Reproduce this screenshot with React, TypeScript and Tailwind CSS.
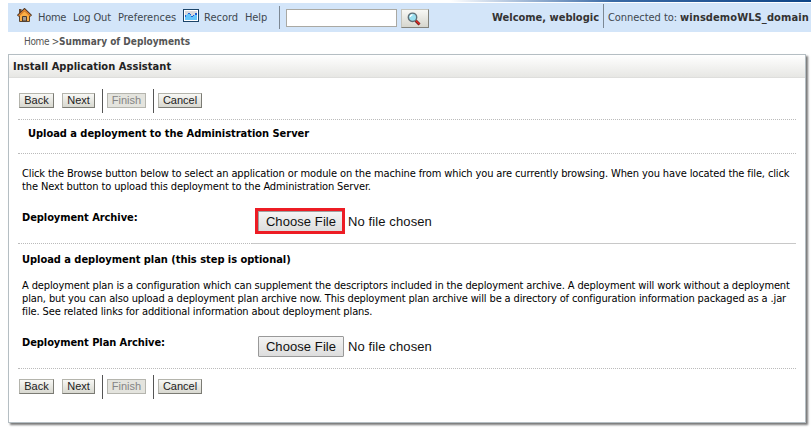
import type { ReactNode } from 'react';

function HomeIcon() {
  return (
    <svg className="ml-[9px] mt-[5px] h-[14px] w-[15px] shrink-0" viewBox="0 0 15 14">
      <path d="M2.500 7V13.500H12.500V7L7.500 2.500Z" fill="#fdae44" stroke="#5b4632" />
      <path d="M2 1h2.500v3l-2.500 2z" fill="#6b4a34" />
      <path d="M.8 8 7.500 1.400l6.700 6.600" fill="none" stroke="#4f3a2a" strokeWidth="2.400" />
      <path d="M1.600 7.800 7.500 2l5.900 5.800" fill="none" stroke="#f58a2c" strokeWidth="1.200" />
      <path d="M5.500 13V8.500h4V13z" fill="#a39a92" stroke="#4a3a2e" />
    </svg>
  );
}

function RecordIcon() {
  return (
    <svg className="absolute left-[175px] top-[6px] h-[13px] w-[16px]" viewBox="0 0 16 13" shapeRendering="crispEdges">
      <path d="M0 0h16v13H0z" fill="#1c4468" />
      <path d="M1 1h14v11H1z" fill="#fff" />
      <path d="M2 2h12v5H2z" fill="#d9d9dc" />
      <path d="M2 7h1V6h1V5h3v1h1v1h3V6h1V5h2v6H2z" fill="#66c6fb" />
      <path d="M2 6h1v2H2zM5 4h2v1H5zM7 5h1v1H7zM8 7h2v1H8zM10 6h1v1h-1zM12 4h2v2h-2z" fill="#1e5fd6" />
    </svg>
  );
}

function SearchIcon() {
  return (
    <svg className="-ml-[2px] h-[14px] w-[14px]" viewBox="0 0 14 14">
      <path d="m8.500 8.500 4 4" stroke="#5c1a18" strokeWidth="2.800" />
      <path d="m8.500 8.300 4 4" stroke="#e02a24" strokeWidth="1.600" />
      <circle cx="5.500" cy="5.300" r="4.200" fill="#9be0f0" stroke="#5f6f78" strokeWidth="1.400" />
      <path d="M3.200 5a2.400 2.400 0 0 1 2.300-2.200" stroke="#fff" strokeWidth="1.200" fill="none" />
    </svg>
  );
}

function SmallButton({ children, className }: { children: ReactNode; className: string }) {
  return (
    <button
      className={
        'mt-[4px] flex h-[15px] items-center justify-center border border-[#b4b4ac] border-b-[#7b7b74] border-r-[#7b7b74] bg-linear-to-b from-[#f8f8f5] to-[#d8d8d0] font-["Liberation_Sans",sans-serif] text-[11px] leading-[13px] text-[#222] ' +
        className
      }
    >
      {children}
    </button>
  );
}

function ButtonRow() {
  return (
    <div className="flex h-[24px] items-start">
      <SmallButton className="ml-[1px] w-[35px]">Back</SmallButton>
      <SmallButton className="ml-[8px] w-[33px]">Next</SmallButton>
      <div className="ml-[7px] h-[24px] w-px bg-[#555]" />
      <button
        disabled
        className="ml-[4px] mt-[4px] flex h-[15px] w-[39px] items-center justify-center border border-[#b5b5ae] bg-[#e4e4de] font-['Liberation_Sans',sans-serif] text-[11px] leading-[13px] text-[#858585]"
      >
        Finish
      </button>
      <div className="ml-[7px] h-[24px] w-px bg-[#555]" />
      <SmallButton className="ml-[4px] w-[44px]">Cancel</SmallButton>
    </div>
  );
}

function FileRow({ label, highlighted = false }: { label: string; highlighted?: boolean }) {
  return (
    <div className="flex h-[26px]">
      <b className="w-[233px] pt-[3px] tracking-[-0.07px]">{label}</b>
      <div className={'flex h-[26px] w-[90px] ' + (highlighted ? 'border-[3px] border-[#ed1c24]' : 'pl-[3px] pt-[3px]')}>
        <button
          className={
            "flex shrink-0 items-center justify-center bg-linear-to-b from-[#f4f4f4] to-[#dddddd] font-['Liberation_Sans',sans-serif] text-[13px] tracking-[0.08px] text-[#111] " +
            (highlighted ? 'h-[20px] w-[84px] border-l border-t border-[#a0a0a0] pl-[1px]' : 'h-[21px] w-[86px] rounded-[1px] border border-[#999]')
          }
        >
          Choose File
        </button>
      </div>
      <span className="ml-[3px] pt-[6px] font-['Liberation_Sans',sans-serif] text-[13px] leading-[16px] tracking-[0.11px] text-[#111]">
        No file chosen
      </span>
    </div>
  );
}

export default function App() {
  return (
    <div className="h-[429px] w-[811px] overflow-hidden bg-white font-['DejaVu_Sans_Condensed','DejaVu_Sans',sans-serif] text-[11px] leading-[13px] text-black">
      <div className="h-[3px]">
        <div className="ml-[450px] h-[2px] bg-linear-to-r from-white via-[#3a6aa5] via-45% to-[#0d4587]" />
      </div>
      <header className="relative ml-[8px] flex h-[29px] whitespace-nowrap bg-[#d3e5f9] text-[#40474f]">
        <HomeIcon />
        <span className="ml-[6px] mt-[8px] w-[35px] tracking-[-0.3px]">Home</span>
        <span className="mt-[8px] w-[45px] tracking-[-0.1px]">Log Out</span>
        <span className="mt-[8px] w-[86px]">Preferences</span>
        <RecordIcon />
        <span className="mt-[8px] w-[41px]">Record</span>
        <span className="mt-[8px] w-[34px] tracking-[-0.1px]">Help</span>
        <div className="mt-[3px] h-[23px] w-px bg-[#7c8894]" />
        <div className="ml-[6px] mt-[6px] h-[18px] w-[111px] border border-[#aaa9a3] bg-white" />
        <button className="ml-[4px] mt-[6px] flex h-[19px] w-[28px] items-center justify-center border border-[#c4c4bc] border-b-[#83837c] border-r-[#83837c] bg-linear-to-b from-[#f8f8f5] to-[#d6d6ce]">
          <SearchIcon />
        </button>
        <b className="ml-auto mt-[8px] text-[#333]">Welcome, weblogic</b>
        <div className="ml-[4px] mt-[1px] h-[24px] w-px bg-[#7c8894]" />
        <span className="ml-[4px] mt-[8px] w-[72px] tracking-[-0.05px]">Connected to:</span>
        <b className="mr-[2px] mt-[8px] w-[129px] tracking-[0.1px] text-[#333]">winsdemoWLS_domain</b>
      </header>
      <nav className="ml-[24px] flex h-[22px] whitespace-nowrap pt-[3px] text-[10px] text-[#555]">
        <span className="w-[35px] tracking-[-0.35px]">Home &gt;</span>
        <b>Summary of Deployments</b>
      </nav>
      <main className="ml-[8px] h-[369px] w-[798px] border border-[#b5bec3] bg-white shadow-[2px_2px_2px_#777]">
        <h1 className="h-[23px] border-b border-[#dededc] bg-linear-to-b from-white to-[#e7e7e4] pl-[4px] pt-[5px] font-bold tracking-[0.05px] text-[#222]">
          Install Application Assistant
        </h1>
        <div className="ml-[9px] mt-[11px] w-[778px]">
          <ButtonRow />
          <h2 className="mt-[6px] h-[34px] border-t border-dotted border-[#bbb] pl-[10px] pt-[7px] font-bold tracking-[-0.03px]">
            Upload a deployment to the Administration Server
          </h2>
          <section className="h-[90px] whitespace-nowrap border-t border-dotted border-[#bbb] pl-[4px] pt-[13px]">
            <p className="mb-[15px] tracking-[-0.12px]">
              Click the Browse button below to select an application or module on the machine from which you are currently browsing. When you have located the file, click
              <br />
              the Next button to upload this deployment to the Administration Server.
            </p>
            <FileRow label="Deployment Archive:" highlighted />
          </section>
          <div className="flex h-px">
            <div className="w-[234px] border-t border-dotted border-[#bbb]" />
            <div className="flex-1 bg-[#c8c8c8]" />
          </div>
          <section className="h-[124px] whitespace-nowrap pl-[4px] pt-[9px]">
            <h2 className="font-bold tracking-[-0.03px]">Upload a deployment plan (this step is optional)</h2>
            <p className="mb-[15px] mt-[13px] tracking-[-0.13px]">
              A deployment plan is a configuration which can supplement the descriptors included in the deployment archive. A deployment will work without a deployment
              <br />
              plan, but you can also upload a deployment plan archive now. This deployment plan archive will be a directory of configuration information packaged as a .jar
              <br />
              file. See related links for additional information about deployment plans.
            </p>
            <FileRow label="Deployment Plan Archive:" />
          </section>
          <div className="border-t border-dotted border-[#bbb] pt-[6px]">
            <ButtonRow />
          </div>
        </div>
      </main>
    </div>
  );
}
